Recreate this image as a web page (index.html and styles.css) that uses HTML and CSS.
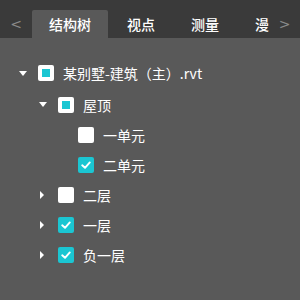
FILE: index.html
```html
<!DOCTYPE html>
<html>
<head>
<meta charset="utf-8">
<link rel="stylesheet" href="styles.css">
</head>
<body>
<div class="panel">
  <div class="tabbar">
    <span class="nav nav-left">&lt;</span>
    <div class="tabs">
      <div class="tab active">结构树</div>
      <div class="tab">视点</div>
      <div class="tab">测量</div>
      <div class="tab">漫</div>
    </div>
    <span class="nav nav-right">&gt;</span>
  </div>
  <div class="tree">
    <div class="row lvl0 tall"><span class="arrow down"></span><span class="cb partial"></span><span class="label">某别墅-建筑（主）.rvt</span></div>
    <div class="row lvl1 mid"><span class="arrow down"></span><span class="cb partial"></span><span class="label">屋顶</span></div>
    <div class="row lvl2"><span class="arrow none"></span><span class="cb"></span><span class="label">一单元</span></div>
    <div class="row lvl2"><span class="arrow none"></span><span class="cb checked"><svg viewBox="0 0 16 16" width="16" height="16"><path d="M4.2 8.3 L7 10.8 L11.8 5.4" fill="none" stroke="#fff" stroke-width="1.9" stroke-linecap="round" stroke-linejoin="round"/></svg></span><span class="label">二单元</span></div>
    <div class="row lvl1"><span class="arrow right"></span><span class="cb"></span><span class="label">二层</span></div>
    <div class="row lvl1"><span class="arrow right"></span><span class="cb checked"><svg viewBox="0 0 16 16" width="16" height="16"><path d="M4.2 8.3 L7 10.8 L11.8 5.4" fill="none" stroke="#fff" stroke-width="1.9" stroke-linecap="round" stroke-linejoin="round"/></svg></span><span class="label">一层</span></div>
    <div class="row lvl1"><span class="arrow right"></span><span class="cb checked"><svg viewBox="0 0 16 16" width="16" height="16"><path d="M4.2 8.3 L7 10.8 L11.8 5.4" fill="none" stroke="#fff" stroke-width="1.9" stroke-linecap="round" stroke-linejoin="round"/></svg></span><span class="label">负一层</span></div>
  </div>
</div>
</body>
</html>
```
FILE: styles.css
```css
html, body {
  margin: 0;
  padding: 0;
  width: 300px;
  height: 300px;
  overflow: hidden;
  background: #595959;
  font-family: "Noto Sans CJK SC", "Noto Sans", sans-serif;
  color: #fff;
}
.panel {
  width: 300px;
  height: 300px;
  background: #595959;
}
.tabbar {
  height: 38px;
  background: #3a3a3a;
  display: flex;
  align-items: flex-end;
}
.nav {
  height: 28px;
  display: flex;
  align-items: center;
  justify-content: center;
  color: #8a8a8a;
  font-size: 14px;
  font-family: "DejaVu Sans", sans-serif;
  flex: none;
}
.nav-left {
  width: 32px;
}
.nav-right {
  width: 31px;
}
.tabs {
  display: flex;
  height: 28px;
  flex: 1;
  min-width: 0;
  overflow: hidden;
}
.tab {
  height: 28px;
  padding: 0 17px;
  margin-right: 2px;
  flex: none;
  display: flex;
  align-items: center;
  justify-content: center;
  font-size: 14px;
  font-weight: 500;
  color: #fff;
  border-radius: 2px 2px 0 0;
}
.tab:last-child {
  padding-right: 0;
}
.tab.active {
  background: #595959;
}
.tree {
  padding-top: 19px;
  display: flex;
  flex-direction: column;
}
.row {
  height: 30px;
  display: flex;
  align-items: center;
  font-size: 14px;
}
.row.tall { height: 32px; }
.row.mid { height: 31px; }
.lvl0 { padding-left: 18px; }
.lvl1 { padding-left: 38px; }
.lvl2 { padding-left: 58px; }
.arrow {
  width: 20px;
  height: 10px;
  display: flex;
  align-items: center;
  justify-content: flex-start;
  flex: none;
}
.arrow.down::before {
  content: "";
  margin-left: 1px;
  border-left: 4px solid transparent;
  border-right: 4px solid transparent;
  border-top: 5px solid #fff;
}
.arrow.right::before {
  content: "";
  margin-left: 2px;
  border-top: 4px solid transparent;
  border-bottom: 4px solid transparent;
  border-left: 4px solid #fff;
}
.cb {
  width: 16px;
  height: 16px;
  box-sizing: border-box;
  background: #fff;
  border-radius: 2px;
  display: flex;
  align-items: center;
  justify-content: center;
  flex: none;
}
.cb.partial::before {
  content: "";
  width: 8px;
  height: 8px;
  background: #1bc6d2;
}
.cb.checked {
  background: #1bc6d2;
}
.cb svg { display: block; }
.label {
  margin-left: 9px;
  white-space: nowrap;
  line-height: 20px;
}
```
